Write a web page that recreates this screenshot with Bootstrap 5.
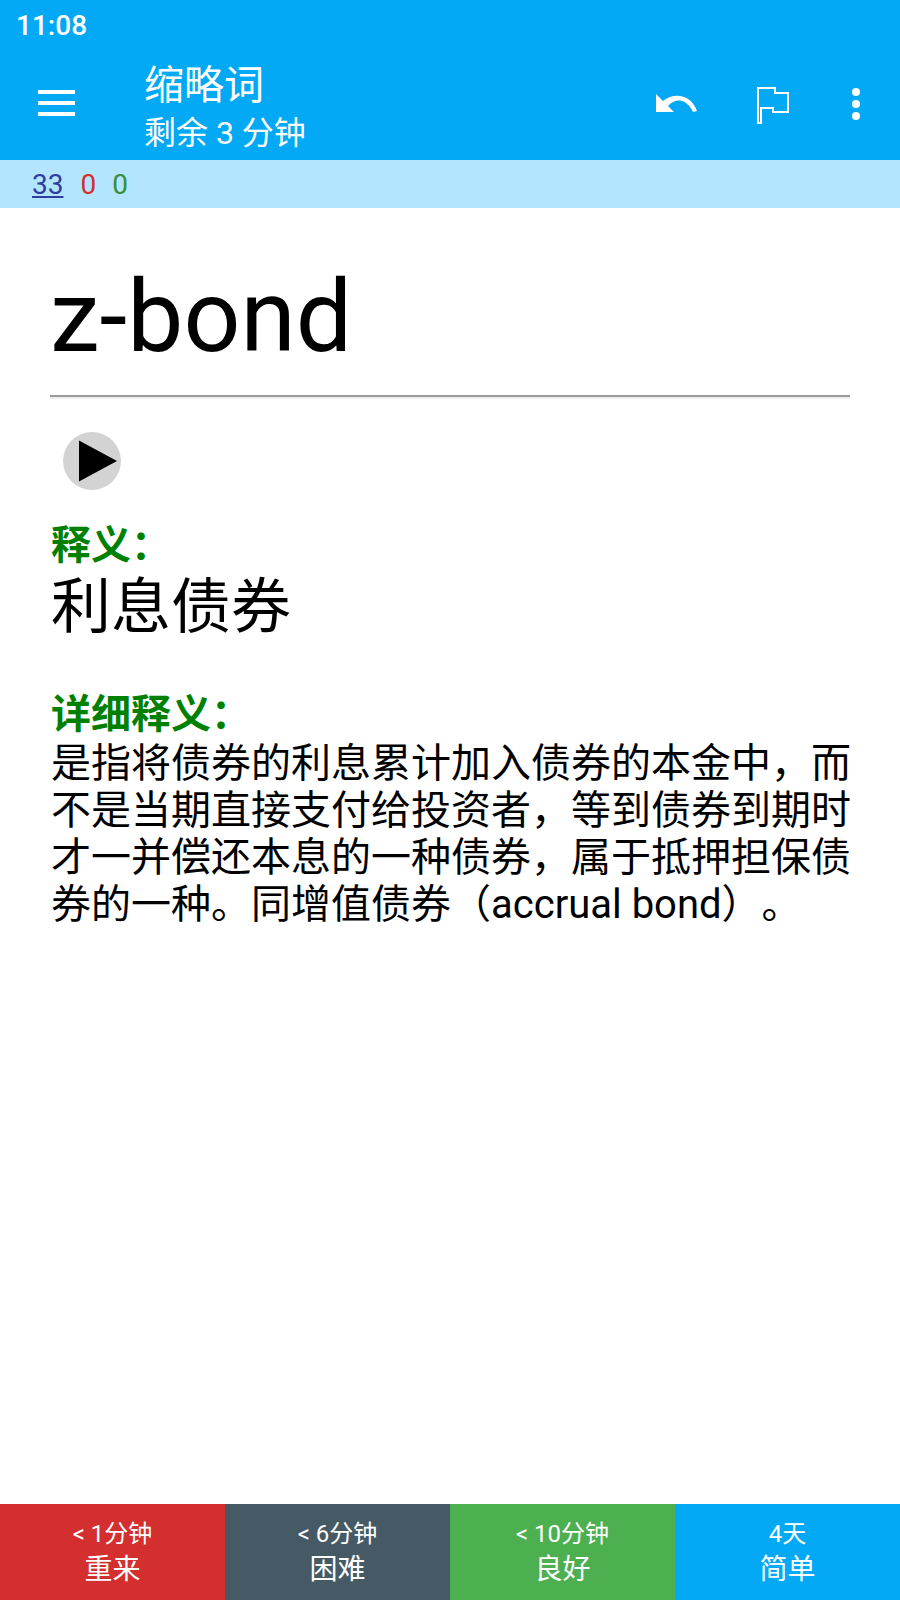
<!DOCTYPE html>
<html lang="zh">
<head>
  <meta charset="UTF-8" />
  <title>缩略词</title>
  <link href="https://cdn.jsdelivr.net/npm/bootstrap@5.3.0/dist/css/bootstrap.min.css" rel="stylesheet" />
  <style>
    body { font-family: Roboto, "Noto Sans CJK SC", sans-serif; height: 1600px; overflow: hidden; color: #000; text-spacing-trim: space-all; }
    .app-top { background: #03a9f4; color: #fff; }
    .clock { font-size: 28px; font-weight: 500; line-height: 33px; padding: 9px 0 0 16px; height: 50px; }
    .toolbar { height: 110px; position: relative; }
    .menu-btn { width: 111px; padding: 40px 0 0 38px; }
    .deck-title { font-size: 40px; line-height: 47px; margin-top: 12px; margin-left: 33px; }
    .deck-sub { font-size: 32px; line-height: 38px; margin-top: 5px; margin-left: 33px; }
    .tool-icon { position: absolute; }
    .counts { background: #b3e5fc; height: 48px; font-size: 28px; line-height: 50px; padding-left: 32px; }
    .cnt-new { color: #303f9f; text-decoration: underline; }
    .cnt-lrn { color: #d32f2f; margin-left: 17px; }
    .cnt-rev { color: #388e3c; margin-left: 16px; }
    .card-body-area { padding: 0 49px 0 50px; }
    .word { font-size: 100px; line-height: 118px; margin: 50px 0 0 0; font-weight: 400; }
    .word-rule { height: 4px; background: #999; border-bottom: 2px solid #eee; margin: 19px 1px 0 0; }
    .play-btn { width: 58px; height: 58px; border-radius: 50%; background: #d3d3d3; margin: 33px 0 0 13px; }
    .field-label { color: #008000; font-weight: 700; font-size: 40px; line-height: 47px; margin-left: 1px; }
    .label-first { margin-top: 32px; }
    .label-second { margin-top: 48px; }
    .meaning { font-size: 60px; line-height: 70px; margin: 4px 0 0 1px; }
    .detail { font-size: 40px; line-height: 46.9px; margin: 3px 0 0 1px; }
    .answer-bar { height: 96px; }
    .answer-btn { flex: 1 1 0; color: #fff; text-align: center; }
    .answer-time { font-size: 24px; line-height: 30px; margin-top: 15px; }
    .answer-name { font-size: 28px; line-height: 36px; margin-top: 3px; }
    .bg-again { background: #d32f2f; }
    .bg-hard { background: #455a64; }
    .bg-good { background: #4caf50; }
    .bg-easy { background: #03a9f4; }
  </style>
</head>
<body class="d-flex flex-column">
  <div class="app-top">
    <div class="clock">11:08</div>
    <div class="toolbar d-flex align-items-start">
      <div class="menu-btn">
        <svg class="d-block" width="37" height="26" viewBox="0 0 37 26"><path d="M0 0h37v4H0zM0 11h37v4H0zM0 22h37v4H0z" fill="#fff"/></svg>
      </div>
      <div>
        <div class="deck-title">缩略词</div>
        <div class="deck-sub">剩余 3 分钟</div>
      </div>
      <svg class="tool-icon" style="left:656px;top:44px" width="42" height="20" viewBox="0 0 42 20"><path d="M0 0V18H18L12 12C20 3 31 5 37 18L41 17C35 0 18 -2 7 7Z" fill="#fff"/></svg>
      <svg class="tool-icon" style="left:756px;top:36px" width="34" height="38" viewBox="0 0 34 38"><path d="M2 37V2H19V7H32V26H17V22H5V37Z" fill="none" stroke="#fff" stroke-width="2"/></svg>
      <svg class="tool-icon" style="left:851px;top:37px" width="10" height="34" viewBox="0 0 10 34"><circle cx="5" cy="5" r="4" fill="#fff"/><circle cx="5" cy="17" r="4" fill="#fff"/><circle cx="5" cy="29" r="4" fill="#fff"/></svg>
    </div>
  </div>
  <div class="counts"><span class="cnt-new">33</span><span class="cnt-lrn">0</span><span class="cnt-rev">0</span></div>

  <div class="card-body-area flex-grow-1">
    <h1 class="word">z-bond</h1>
    <div class="word-rule"></div>
    <div class="play-btn d-flex align-items-center">
      <svg width="58" height="58" viewBox="0 0 58 58"><path d="M16 8.500V49.500L54 29Z" fill="#000"/></svg>
    </div>
    <div class="field-label label-first">释义：</div>
    <div class="meaning">利息债券</div>
    <div class="field-label label-second">详细释义：</div>
    <div class="detail">是指将债券的利息累计加入债券的本金中，而不是当期直接支付给投资者，等到债券到期时才一并偿还本息的一种债券，属于抵押担保债券的一种。同增值债券（accrual bond）。</div>
  </div>

  <div class="answer-bar d-flex">
    <div class="answer-btn bg-again"><div class="answer-time">&lt; 1分钟</div><div class="answer-name">重来</div></div>
    <div class="answer-btn bg-hard"><div class="answer-time">&lt; 6分钟</div><div class="answer-name">困难</div></div>
    <div class="answer-btn bg-good"><div class="answer-time">&lt; 10分钟</div><div class="answer-name">良好</div></div>
    <div class="answer-btn bg-easy"><div class="answer-time">4天</div><div class="answer-name">简单</div></div>
  </div>
  <script src="https://cdn.jsdelivr.net/npm/bootstrap@5.3.0/dist/js/bootstrap.bundle.min.js"></script>
</body>
</html>
